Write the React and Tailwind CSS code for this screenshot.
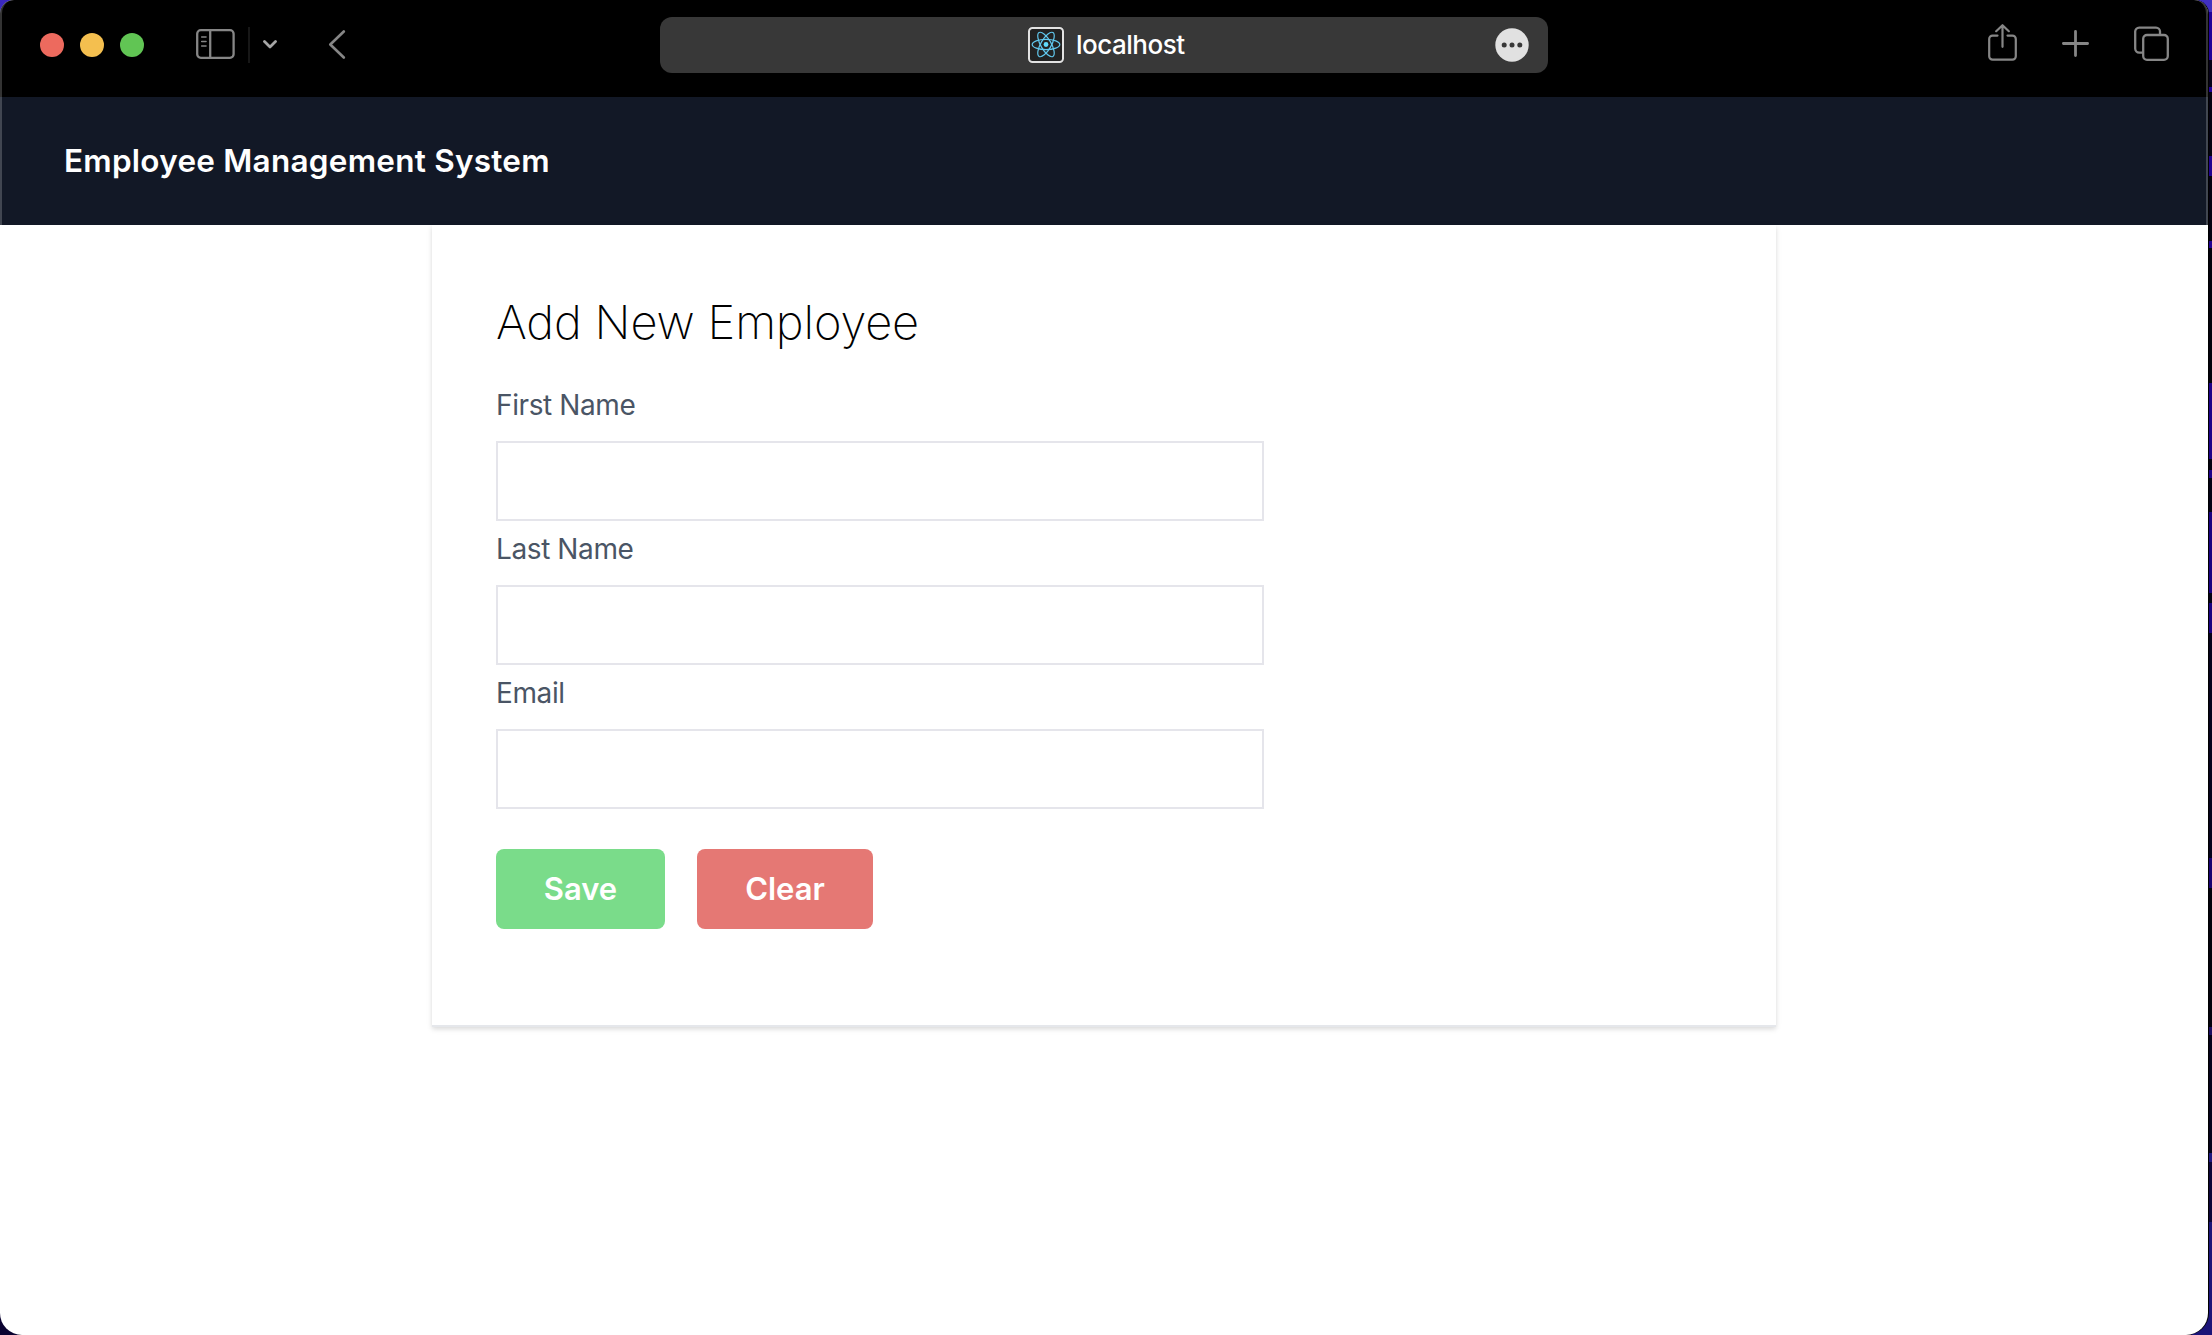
import React from "react";

const font = "font-['Inter','Liberation_Sans',sans-serif]";

// Wallpaper bands visible beyond the window's right edge: [height, colour]
const bands = [
  [12, "#4030c0"], [48, "#200098"], [27, "#050018"], [5, "#200098"], [64, "#030010"],
  [20, "#200090"], [65, "#030010"], [7, "#200090"], [135, "#02000c"], [76, "#1e0088"],
  [11, "#030010"], [8, "#1e0088"], [34, "#030014"], [81, "#1a0080"], [10, "#030014"],
  [30, "#1a0080"], [225, "#04001a"], [30, "#180070"], [139, "#02000c"], [8, "#1a0c60"],
  [118, "#04001a"], [9, "#201880"], [60, "#0c0438"], [113, "#1c1478"],
];

function Toolbar() {
  return (
    <div className="flex h-[97px] items-start bg-black pl-10 pr-[39px]">
      <div className="flex h-[90px] w-[620px] items-center">
        <div className="flex gap-4">
          <span className="size-6 rounded-full bg-[#ed6a5e]" />
          <span className="size-6 rounded-full bg-[#f4bf4f]" />
          <span className="size-6 rounded-full bg-[#61c554]" />
        </div>
        <svg className="-mt-0.5 ml-[52px]" width="39" height="30" viewBox="0 0 39 30" fill="none" stroke="#868686" strokeWidth="2.3" strokeLinecap="round">
          <rect x="1.2" y="1.2" width="36.4" height="27.6" rx="3.6" />
          <path d="M14.2 1.5V28.5" />
          <path d="M5.7 8H10M5.7 12.5H10M5.7 17H10" strokeWidth="1.6" />
        </svg>
        <span className="ml-[13px] h-9 w-0.5 bg-[#171717]" />
        <svg className="-mt-px ml-[13px]" width="14" height="9" viewBox="0 0 14 9" fill="none" stroke="#a6a6a6" strokeWidth="2.8" strokeLinecap="round" strokeLinejoin="round">
          <path d="M1.5 1.5L7 7L12.5 1.5" />
        </svg>
        <svg className="-mt-0.5 ml-[51px]" width="18" height="29" viewBox="0 0 18 29" fill="none" stroke="#868686" strokeWidth="2.6" strokeLinecap="round" strokeLinejoin="round">
          <path d="M15.8 1.5L2.3 14.5L15.8 27.5" />
        </svg>
      </div>
      <div className="mt-[17px] flex h-14 w-[888px] items-center rounded-xl bg-[#383838]">
        <svg className="ml-[368px]" width="36" height="36" viewBox="0 0 36 36" fill="none">
          <rect x="1" y="1" width="34" height="34" rx="3.5" fill="#222" stroke="#e2e2e2" strokeWidth="2" />
          <circle cx="18" cy="17.5" r="2.4" fill="#61dafb" />
          <g stroke="#61c8ee" strokeWidth="1.2">
            <ellipse cx="18" cy="17.5" rx="13.8" ry="5.2" />
            <ellipse cx="18" cy="17.5" rx="13.8" ry="5.2" transform="rotate(60 18 17.5)" />
            <ellipse cx="18" cy="17.5" rx="13.8" ry="5.2" transform="rotate(120 18 17.5)" />
          </g>
        </svg>
        <span className="ml-3 text-[26px] font-medium leading-8 tracking-[-0.5px] text-white">localhost</span>
        <svg className="ml-auto mr-[19px]" width="34" height="34" viewBox="0 0 34 34">
          <circle cx="17" cy="17" r="16.7" fill="#e1e1e1" />
          <circle cx="9.2" cy="17" r="2.5" fill="#383838" />
          <circle cx="17" cy="17" r="2.5" fill="#383838" />
          <circle cx="24.8" cy="17" r="2.5" fill="#383838" />
        </svg>
      </div>
      <div className="ml-auto flex h-[90px] items-start">
        <svg className="mt-6" width="29" height="38" viewBox="0 0 29 38" fill="none" stroke="#868686" strokeWidth="2.2" strokeLinecap="round" strokeLinejoin="round">
          <path d="M9.5 11.6H4.6a3.4 3.4 0 0 0-3.4 3.4V32.2a3.4 3.4 0 0 0 3.4 3.4H24.4a3.4 3.4 0 0 0 3.4-3.4V15a3.4 3.4 0 0 0-3.4-3.4H19.5" />
          <path d="M14.5 22.8V1.5M8.2 7.2L14.5 1.2L20.8 7.2" />
        </svg>
        <svg className="ml-[45px] mt-[30px]" width="27" height="27" viewBox="0 0 27 27" fill="none" stroke="#868686" strokeWidth="2.8" strokeLinecap="round">
          <path d="M13.5 1.4V25.6M1.4 13.5H25.6" />
        </svg>
        <svg className="ml-[45px] mt-[26px]" width="35" height="36" viewBox="0 0 35 36" fill="none" stroke="#868686" strokeWidth="2.3" strokeLinecap="round">
          <path d="M8.5 26.6H5.2a4 4 0 0 1-4-4V5.6a4 4 0 0 1 4-4H22a4 4 0 0 1 4 4V8.6" />
          <rect x="9.2" y="9" width="24.6" height="24.8" rx="3.8" />
        </svg>
      </div>
    </div>
  );
}

function Field({ label }) {
  return (
    <label className="block">
      <span className="flex h-16 items-center pb-[9px] text-[28px] leading-10 tracking-[-0.4px] text-gray-600">{label}</span>
      <input className="block h-20 w-[768px] border-2 border-[#e5e5eb] bg-white" />
    </label>
  );
}

export default function App() {
  return (
    <div className={`${font} relative h-[1335px] w-[2212px] overflow-hidden bg-[#0a0230]`}>
      <div className="absolute left-0 top-0 size-4 bg-[#3a28c0]" />
      <div className="absolute right-0 top-0 flex h-full w-5 flex-col">
        {bands.map(([height, color], i) => (
          <div key={i} className="shrink-0" style={{ height, backgroundColor: color }} />
        ))}
      </div>
      <div className="relative h-full w-[2208px] overflow-hidden rounded-b-[22px] rounded-t-[14px] bg-white shadow-[1px_0_0_#000]">
        <Toolbar />
        <header className="flex h-32 items-center bg-[#121826] pl-16 text-[31.5px] font-semibold leading-10 tracking-[0.25px] text-white">
          Employee Management System
        </header>
        <main className="ml-[432px] h-[802px] w-[1344px] border-b-2 border-[#e5e7eb] px-16 shadow-[0_2px_6px_rgba(0,0,0,0.1),0_2px_4px_rgba(0,0,0,0.06)]">
          <h1 className="pt-[65px] text-[47px] font-extralight leading-[64px] tracking-[-0.15px] text-black">Add New Employee</h1>
          <div className="mt-[23px]">
            <Field label="First Name" />
            <Field label="Last Name" />
            <Field label="Email" />
          </div>
          <div className="mt-10 flex gap-8 text-[31px] font-semibold text-white">
            <button className="h-20 w-[169px] rounded-lg bg-[#7adc8a]">Save</button>
            <button className="h-20 w-44 rounded-lg bg-[#e57874]">Clear</button>
          </div>
        </main>
        <div className="pointer-events-none absolute inset-x-0 top-0 h-[225px] rounded-t-[14px] border-x-2 border-white/20" />
      </div>
    </div>
  );
}
